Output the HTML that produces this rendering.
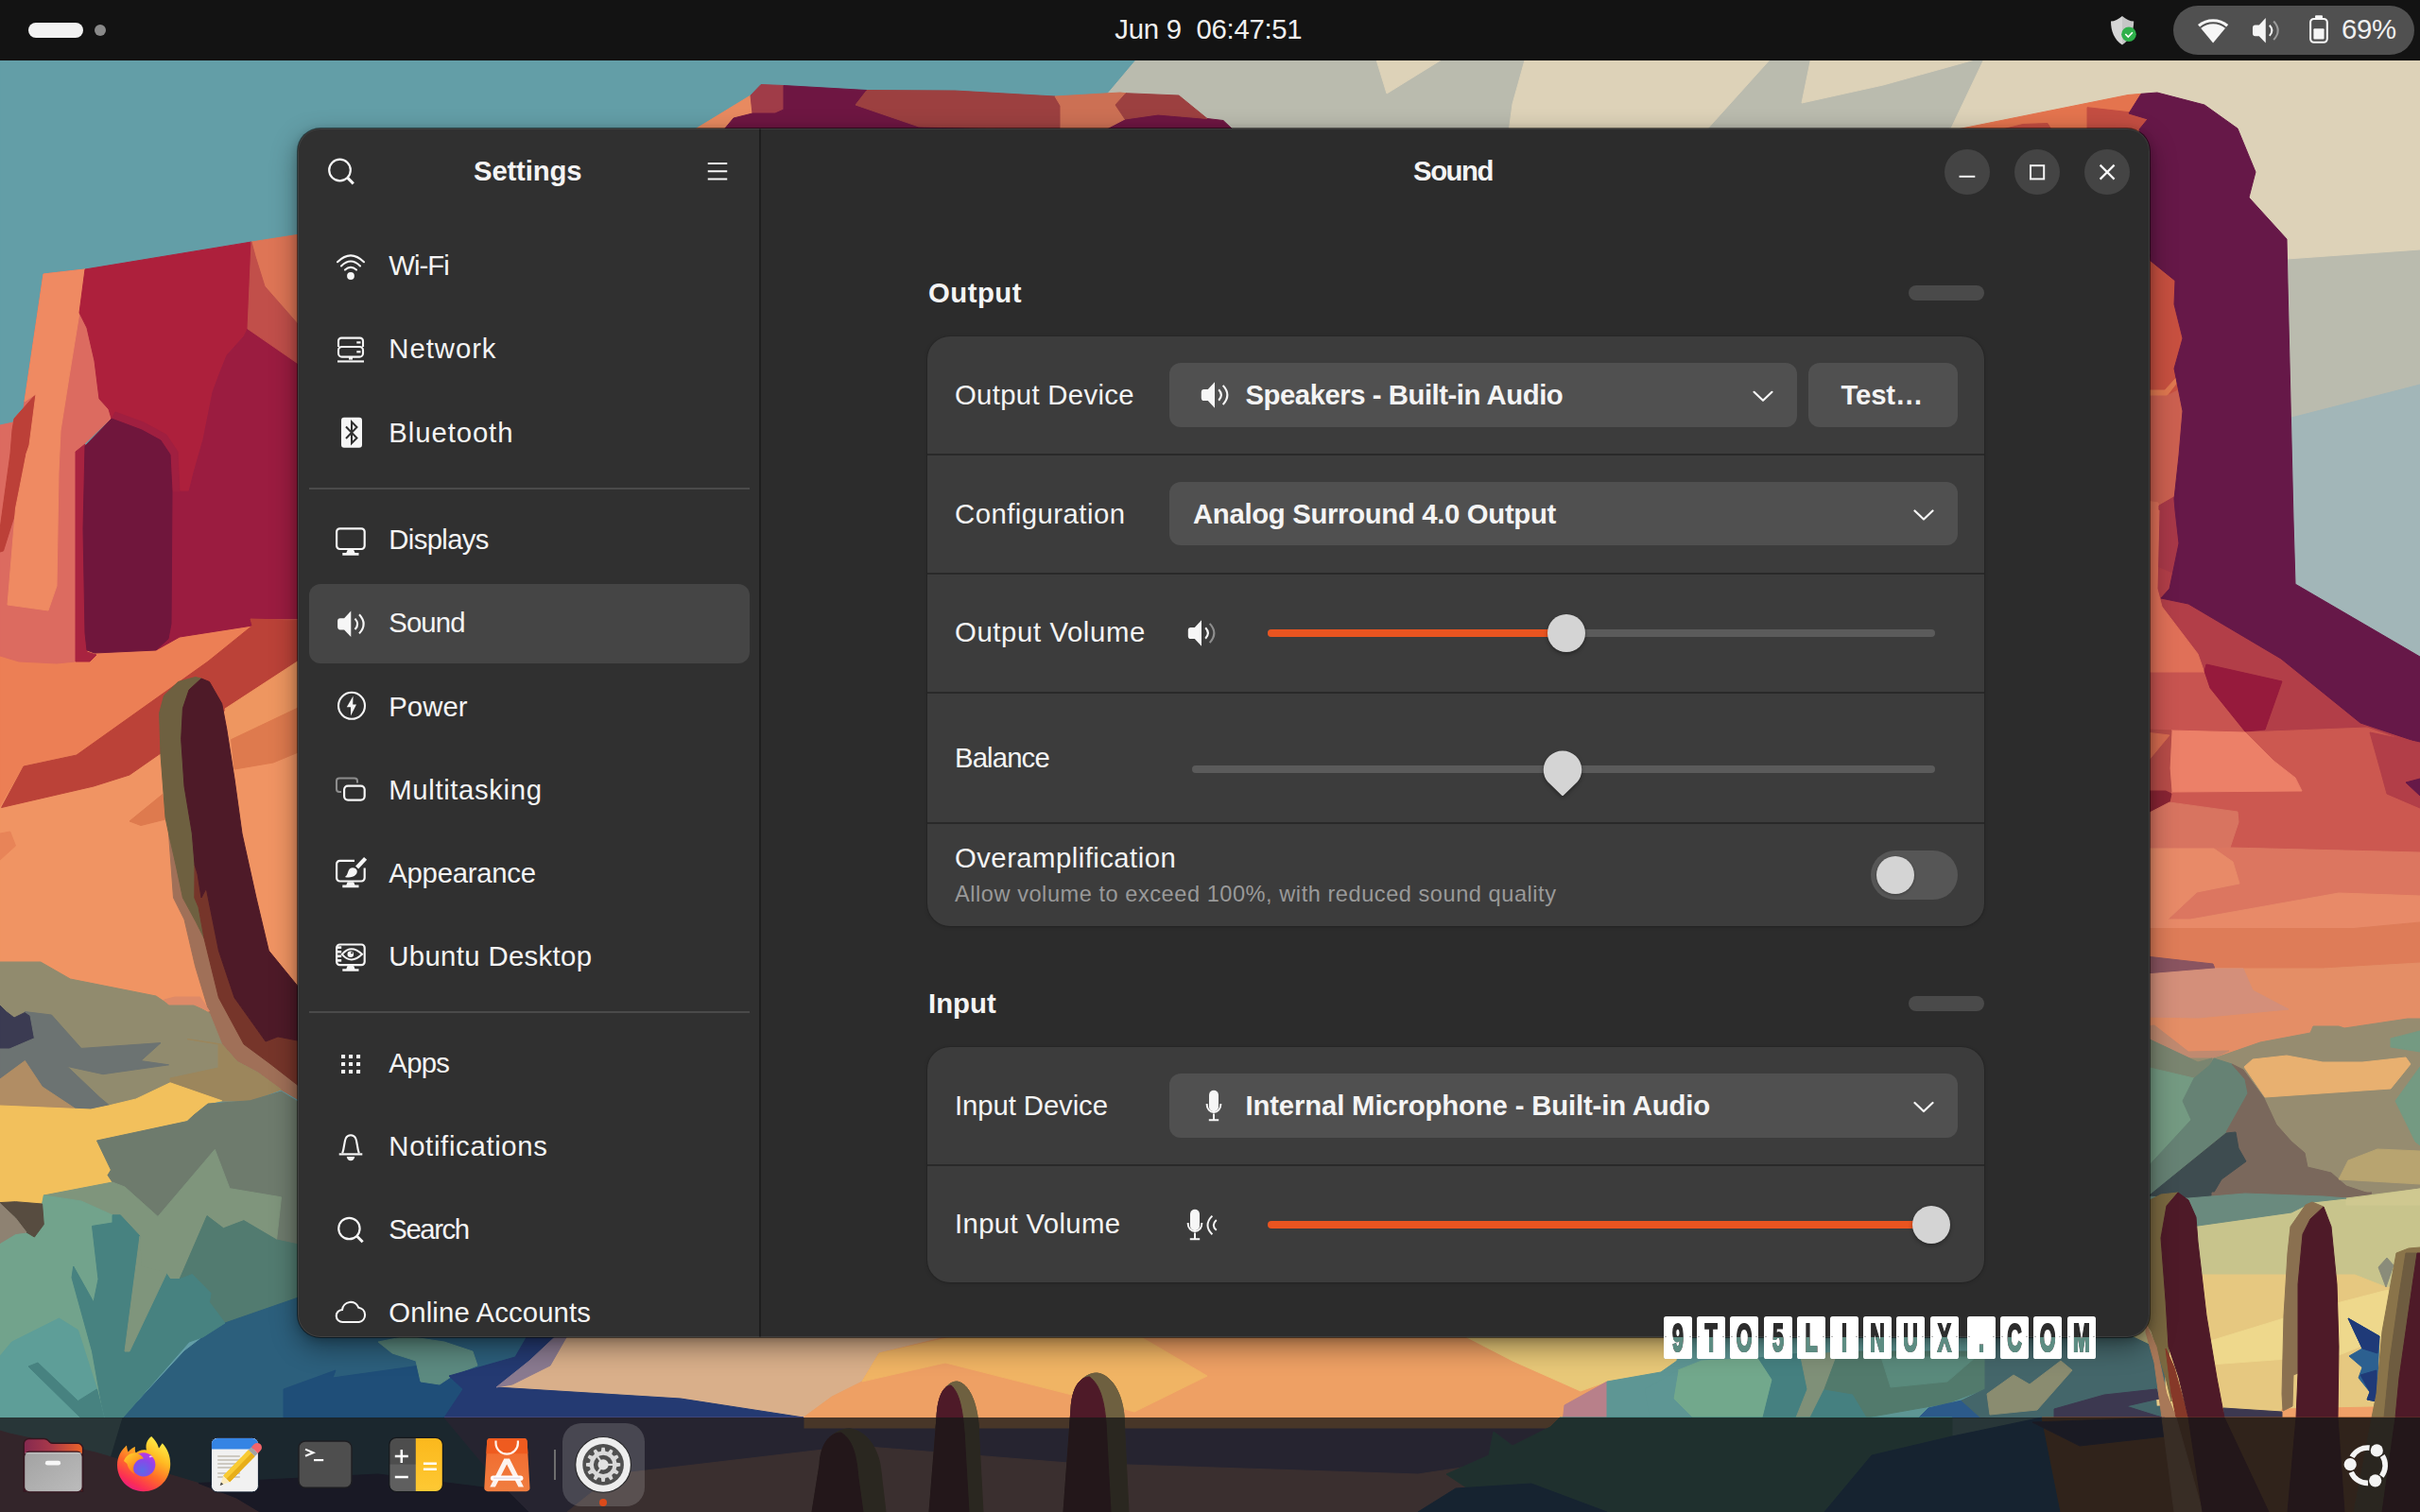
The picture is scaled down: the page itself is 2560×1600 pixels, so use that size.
<!DOCTYPE html>
<html lang="en"><head><meta charset="utf-8"><title>Settings - Sound</title>
<style>
*{box-sizing:border-box}
html,body{margin:0;padding:0}
body{width:2560px;height:1600px;overflow:hidden;background:#639ea7;position:relative;font-family:"Liberation Sans", sans-serif;-webkit-font-smoothing:antialiased}
.wall{position:absolute;left:0;top:0}
.abs{position:absolute}
.t{position:absolute;white-space:pre;line-height:1;font-kerning:normal}
#topbar{position:absolute;left:0;top:0;width:2560px;height:64px;background:#131313}
#pill{position:absolute;left:30px;top:24px;width:58px;height:16px;border-radius:8px;background:#f2f2f2}
#dot{position:absolute;left:100px;top:26px;width:12px;height:12px;border-radius:6px;background:#8a8a8a}
#sys{position:absolute;left:2299px;top:6px;width:255px;height:52px;border-radius:26px;background:#505050}
#win{position:absolute;left:315px;top:136px;width:1959px;height:1279px;border-radius:24px;background:#2c2c2c;
 box-shadow:0 0 0 1px rgba(0,0,0,.5),0 10px 28px rgba(0,0,0,.42),0 2px 8px rgba(0,0,0,.2);overflow:hidden}
#win:after{content:"";position:absolute;inset:0;border-radius:24px;box-shadow:inset 0 0 0 1px rgba(255,255,255,.08);pointer-events:none}
#side{position:absolute;left:0;top:0;width:488px;height:1279px;background:#303030}
#divider{position:absolute;left:488px;top:0;width:2px;height:1279px;background:#1e1e1e}
.sep{position:absolute;left:12px;width:466px;height:2px;background:#4a4a4a}
#sel{position:absolute;left:12px;top:482px;width:466px;height:84px;border-radius:12px;background:#454545}
.wb{position:absolute;top:22px;width:48px;height:48px;border-radius:24px;background:#444}
.card{position:absolute;left:666px;width:1118px;border-radius:24px;background:#3c3c3c;overflow:hidden;box-shadow:0 0 0 1px rgba(0,0,0,.08),0 1px 4px rgba(0,0,0,.18)}
.rowsep{position:absolute;left:0;width:1118px;height:2px;background:#292929}
.btn{position:absolute;border-radius:12px;background:#505050}
.lvl{position:absolute;left:1704px;width:80px;height:16px;border-radius:8px;background:#4a4a4a}
.trough{position:absolute;height:8px;border-radius:4px;background:#5b5b5b}
.fill{position:absolute;height:8px;border-radius:4px;background:#e95420}
.knob{position:absolute;width:40px;height:40px;border-radius:20px;background:#d4d4d4;box-shadow:0 2px 4px rgba(0,0,0,.35)}
#switch{position:absolute;left:1664px;top:764px;width:92px;height:52px;border-radius:26px;background:#565656}
#dock{position:absolute;left:0;top:1500px;width:2560px;height:100px;background:rgba(22,22,22,.77)}
#tile{position:absolute;left:595px;top:6px;width:87px;height:88px;border-radius:20px;background:rgba(255,255,255,.16)}
.wm{position:absolute;top:1392.5px;width:30px;height:45.2px;background:#fff;border-radius:2.6px;overflow:hidden;text-align:center;isolation:isolate}
.wm b{display:block;font-size:43px;line-height:45px;transform:scaleX(.5);transform-origin:50% 50%;font-weight:700;color:#2c2c2c;-webkit-text-stroke:2.2px #2c2c2c;margin:0 -10px}
.wm:after{content:"";position:absolute;left:0;right:0;top:22.5px;bottom:0;background:#5d8c82;mix-blend-mode:lighten}
.wm:before{content:"";position:absolute;left:1px;right:1px;top:21.5px;height:1px;background:repeating-linear-gradient(90deg,rgba(120,120,120,.55) 0 2px,transparent 2px 26px);z-index:2}
.ovl{position:absolute;left:0;top:0}
</style></head>
<body>
<svg class="wall" width="2560" height="1600" viewBox="0 0 2560 1600" stroke-width="1" stroke-linejoin="round">
<polygon fill="#639ea7" stroke="#639ea7" points="0,0 1201,0 1201,64 1172,100 1172,400 0,600"/>
<polygon fill="#babbae" stroke="#babbae" points="1250,0 2560,0 2560,1100 1100,1100 1171,100 1203,62"/>
<polygon fill="#ddd2b8" stroke="#ddd2b8" points="1455,60 1530,60 1467,99"/>
<polygon fill="#ddd2b8" stroke="#ddd2b8" points="1614,60 1600,110 1596,140 1803,140 1875,60"/>
<polygon fill="#ddd2b8" stroke="#ddd2b8" points="1916,60 1906,109 1992,90 2100,60"/>
<polygon fill="#ddd2b8" stroke="#ddd2b8" points="2100,60 2062,140 2560,140 2560,60"/>
<polygon fill="#ddd2b8" stroke="#ddd2b8" points="2062,136 2560,136 2560,264 2419,274 2300,300 2000,300"/>
<polygon fill="#a2b6b8" stroke="#a2b6b8" points="2424,442 2560,407 2560,720 2424,700"/>
<polygon fill="#e88a60" stroke="#e88a60" points="735,137 794,101 796,120 776,125 766,137"/>
<polygon fill="#a03c48" stroke="#a03c48" points="794,101 805,89.5 829,90.5 829,116 820,120 796,120"/>
<polygon fill="#6e1642" stroke="#6e1642" points="829,90.5 917,95.5 905,111 972,134 1304,137 1294,127.5 1277,125.5 1225,121 1190,126 1169,137 766,137 776,125 796,120 820,120 829,116"/>
<polygon fill="#9c4040" stroke="#9c4040" points="917,95.5 1010,96 1116,102 1122,112 1122,137 972,134 905,111"/>
<polygon fill="#cc7054" stroke="#cc7054" points="1116,102 1185,98 1191,98.7 1180,111 1190,126 1169,137 1122,137 1122,112"/>
<polygon fill="#9c4040" stroke="#9c4040" points="1191,98.7 1247,101 1277,125.5 1225,121 1190,126 1180,111"/>
<polygon fill="#e4744e" stroke="#e4744e" points="2070,137 2251,100.5 2265,99.3 2252,120 2272,126 2263,137 2274,300 2070,300"/>
<polygon fill="#c44e42" stroke="#c44e42" points="2208,113.7 2252,118.7 2272,126 2263,137 2208,137"/>
<polygon fill="#c44e42" stroke="#c44e42" points="2118,137 2140,131.5 2166,130.5 2170,137"/>
<polygon fill="#c85040" stroke="#c85040" points="2270,270 2310,270 2310,420 2270,420"/>
<polygon fill="#e07850" stroke="#e07850" points="2270,413 2290,413 2302,400 2302,406 2292,419 2270,419"/>
<polygon fill="#cc6050" stroke="#cc6050" points="2270,419 2292,419 2310,410 2310,545 2270,545"/>
<polygon fill="#dc7058" stroke="#dc7058" points="2270,530 2283,532 2284,545 2270,545"/>
<polygon fill="#a83848" stroke="#a83848" points="2284,535 2310,520 2310,640 2282,623"/>
<polygon fill="#b23e48" stroke="#b23e48" points="2282,600 2560,720 2560,860 2270,860"/>
<polygon fill="#e07058" stroke="#e07058" points="2270,540 2284,540 2282,623 2287,642 2325,692 2332,712 2270,712"/>
<polygon fill="#c85450" stroke="#c85450" points="2270,712 2332,712 2338,728 2375,775 2270,772"/>
<polygon fill="#961a3c" stroke="#961a3c" points="2334,703 2414,721 2396,772 2375,774 2338,728 2332,710"/>
<polygon fill="#661848" stroke="#661848" points="2265,99.3 2282,98 2332,111 2367,136 2386,182 2379,209 2419,253 2420,300 2426,550 2428,618 2560,695 2560,786 2497,765 2413,697 2315,639 2286,633 2295,623 2305,575 2301,540 2300,528 2305,482 2309,435 2300,390 2309,358 2300,322 2301,297 2275,276 2263,137 2272,126 2252,120"/>
<polygon fill="#cc5850" stroke="#cc5850" points="2375,775 2504,770 2560,790 2560,902 2359,897 2368,870 2367,859 2296,849 2297,838 2435,837 2428,823 2405,805 2380,780"/>
<polygon fill="#ec8068" stroke="#ec8068" points="2297,773 2375,775 2380,780 2405,805 2428,823 2435,837 2297,838 2295,813"/>
<polygon fill="#b84c48" stroke="#b84c48" points="2270,772 2297,773 2295,813 2297,838 2270,838"/>
<polygon fill="#d86c50" stroke="#d86c50" points="2270,775 2295,778 2270,808"/>
<polygon fill="#b23e48" stroke="#b23e48" points="2507,775 2560,786 2560,855 2525,840 2519,818"/>
<polygon fill="#661848" stroke="#661848" points="2545,828 2560,824 2560,842"/>
<polygon fill="#8a2434" stroke="#8a2434" points="2270,837 2291,837 2297,840 2295,849 2270,862"/>
<polygon fill="#d87460" stroke="#d87460" points="2270,862 2295,849 2367,859 2368,870 2359,897 2342,898 2270,898"/>
<polygon fill="#dc7660" stroke="#dc7660" points="2359,897 2560,902 2560,948 2474,945 2317,973 2293,973 2324,944 2369,935 2362,912 2342,898"/>
<polygon fill="#e88a68" stroke="#e88a68" points="2270,898 2342,898 2362,912 2369,935 2324,944 2293,973 2317,973 2474,945 2560,948 2560,976 2490,982.5 2270,982.5"/>
<polygon fill="#de7c58" stroke="#de7c58" points="2270,982.5 2490,982.5 2560,976 2560,1019 2457,1025 2342,1025 2341,1020 2270,1012"/>
<polygon fill="#8a5460" stroke="#8a5460" points="2270,1012 2341,1020 2343,1025 2270,1031"/>
<polygon fill="#e48e66" stroke="#e48e66" points="2343,1025 2457,1025 2560,1019 2560,1078 2547,1078 2480,1088 2474,1086 2447,1086 2444,1093 2391,1103 2342,1120 2358,1112 2315,1113 2279,1085 2270,1086 2270,1076 2325,1077 2421,1068 2383,1048 2373,1025"/>
<polygon fill="#d48f7a" stroke="#d48f7a" points="2270,1031 2343,1025 2373,1025 2383,1048 2421,1068 2325,1077 2270,1076"/>
<polygon fill="#c08a70" stroke="#c08a70" points="2270,1086 2279,1085 2315,1113 2358,1112 2340,1120 2325,1124 2270,1098"/>
<polygon fill="#968c70" stroke="#968c70" points="2342,1120 2391,1103 2444,1093 2447,1086 2474,1086 2480,1088 2547,1078 2560,1078 2560,1270 2300,1270 2300,1120"/>
<polygon fill="#7a8570" stroke="#7a8570" points="2270,1098 2325,1124 2340,1120 2338,1127 2321,1141 2270,1129"/>
<polygon fill="#749a82" stroke="#749a82" points="2270,1129 2321,1141 2309,1165 2318,1185 2270,1237"/>
<polygon fill="#668274" stroke="#668274" points="2338,1127 2342,1120 2361,1126 2375,1142 2378,1157 2355,1198 2270,1268 2270,1237 2318,1185 2309,1165 2321,1141"/>
<polygon fill="#7a685c" stroke="#7a685c" points="2361,1126 2373,1132 2395,1162 2408,1190 2424,1208 2438,1220 2441,1235 2466,1241 2482,1255 2509,1264 2482,1270 2340,1265 2350,1248 2376,1229 2368,1215 2365,1198 2355,1198 2378,1157 2375,1142"/>
<polygon fill="#3e4c50" stroke="#3e4c50" points="2355,1199 2365,1198 2368,1215 2376,1229 2350,1248 2340,1265 2315,1272 2270,1275 2270,1268"/>
<polygon fill="#e8b070" stroke="#e8b070" points="2374,1129 2383,1121 2419,1117 2457,1124 2499,1124 2545,1119 2550,1126 2529,1152 2396,1161"/>
<polygon fill="#749a82" stroke="#749a82" points="2560,1091 2529,1099 2529,1108 2560,1113"/>
<polygon fill="#749a82" stroke="#749a82" points="2560,1129 2534,1165 2555,1208 2560,1212"/>
<polygon fill="#b8a470" stroke="#b8a470" points="2474,1248 2484,1228 2515,1216 2560,1218 2560,1253"/>
<polygon fill="#7a685c" stroke="#7a685c" points="2340,1262 2509,1262 2474,1270 2340,1270"/>
<polygon fill="#c8c48c" stroke="#c8c48c" points="2270,1300 2325,1297 2424,1283 2446,1272 2482,1268 2560,1258 2560,1372 2490,1352 2270,1352"/>
<polygon fill="#cfc890" stroke="#cfc890" points="2482,1270 2560,1258 2560,1275 2482,1275"/>
<polygon fill="#6a8a7e" stroke="#6a8a7e" points="2270,1266 2315,1268 2375,1263 2458,1266 2482,1268 2446,1272 2424,1283 2325,1297 2270,1300"/>
<polygon fill="#e6c880" stroke="#e6c880" points="2270,1349 2491,1349 2524,1362 2560,1365 2560,1500 2270,1500"/>
<polygon fill="#eed88c" stroke="#eed88c" points="2338,1419 2416,1395 2472,1379 2522,1366 2560,1360 2560,1400 2474,1434 2338,1444"/>
<polygon fill="#f0a068" stroke="#f0a068" points="2414,1491 2560,1488 2560,1500 2414,1500"/>
<polygon fill="#8a8c7a" stroke="#8a8c7a" points="2516,1341 2525,1331 2532,1339 2524,1362"/>
<polygon fill="#2c6090" stroke="#2c6090" points="2484,1395 2517,1414 2514,1483 2504,1481 2507,1473 2495,1458 2499,1447 2485,1435 2499,1427"/>
<polygon fill="#1f3a78" stroke="#1f3a78" points="2484,1395 2517,1414 2515,1432 2499,1427"/>
<polygon fill="#1f3a78" stroke="#1f3a78" points="2497,1455 2514,1450 2514,1483 2504,1481 2507,1473"/>
<polygon fill="#44666a" stroke="#44666a" points="2100,1410 2290,1410 2290,1500 2100,1500"/>
<polygon fill="#a8a070" stroke="#a8a070" points="2255,1413 2274,1400 2280,1425"/>
<polygon fill="#3c3850" stroke="#3c3850" points="2173,1491 2226,1476 2281,1470 2284,1480 2249,1488 2287,1500 2173,1500"/>
<polygon fill="#e8cc88" stroke="#e8cc88" points="2249,1488 2284,1481 2286,1487"/>
<polygon fill="#3c3850" stroke="#3c3850" points="2352,1490 2414,1494 2414,1500 2353,1500"/>
<polygon fill="#8a7050" stroke="#8a7050" points="2423,1298 2439,1275 2446,1272 2458,1277 2444,1290 2436,1306 2431,1359 2431,1453 2426,1455 2425,1488 2415,1493 2414,1475 2416,1392 2420,1326"/>
<polygon fill="#4e1a28" stroke="#4e1a28" points="2458,1277 2466,1298 2472,1359 2474,1425 2473,1500 2429,1500 2431,1453 2431,1359 2436,1306 2444,1290"/>
<polygon fill="#8a744a" stroke="#8a744a" points="2535,1326 2548,1321 2560,1320 2560,1500 2509,1500 2514,1475 2520,1409 2529,1359"/>
<polygon fill="#6e5c40" stroke="#6e5c40" points="2545,1326 2557,1326 2553,1353 2538,1458 2534,1500 2522,1500 2528,1440 2538,1370"/>
<polygon fill="#4e1a28" stroke="#4e1a28" points="2557,1326 2560,1326 2560,1500 2534,1500 2538,1458 2553,1353"/>
<polygon fill="#ec7f55" stroke="#ec7f55" points="0,640 330,640 330,860 0,860"/>
<polygon fill="#f09463" stroke="#f09463" points="0,855 25,811 81,799 170,797 330,690 330,1100 0,1100"/>
<polygon fill="#dc6b60" stroke="#dc6b60" points="0,450 14,447 15,443 25,432 26,425 46,290 90,285 84,331 92,347 100,382 105,422 115,433 118,442 82,477 80,700 60,702 20,700 0,694"/>
<polygon fill="#bc4038" stroke="#bc4038" points="15,443 38,417 31,471 27,480 17,540 3.5,583 0,584 0,560 11,480 13,455"/>
<polygon fill="#ef8a62" stroke="#ef8a62" points="46,290 90,285 84,331 73,399 64,456 62,500 60,620 51,646 8,640 16.5,538 28,480 31,471 38,417 26,425"/>
<polygon fill="#ad203c" stroke="#ad203c" points="90,285 266,256 262,348 258,356 240,376 232,396 225,415 215,465 205,500 200,520 182,520 180,481 170,466 150,455 118,443 115,433 105,422 100,382 92,347 84,331"/>
<polygon fill="#a82340" stroke="#a82340" points="80,478 90,470 92,690 102,693 95,700 80,700"/>
<polygon fill="#9b1c40" stroke="#9b1c40" points="258,356 262,348 330,390 330,655 265,655 267,662 190,674 165,688 180,640 182,520 200,520 205,500 215,465 225,415 232,396 240,376"/>
<polygon fill="#a01f40" stroke="#a01f40" points="118,443 150,455 170,466 180,481 182,520 190,520 188,478 176,460 152,447 122,436"/>
<polygon fill="#70163c" stroke="#70163c" points="118,443 150,455 170,466 180,481 182,520 181,660 178,676 165,688 100,691 92,688 90,670 88,560 90,472"/>
<polygon fill="#de7556" stroke="#de7556" points="266,256 330,246 330,360 280,303 270,271"/>
<polygon fill="#c14f4a" stroke="#c14f4a" points="266,256 270,271 280,303 330,360 330,395 262,348"/>
<polygon fill="#bb4238" stroke="#bb4238" points="265,655 330,657 330,690 170,797 137,820 99,832 1.6,854.5 25,811 81,799 220,700 267,662"/>
<polygon fill="#ee9660" stroke="#ee9660" points="238,750 330,690 330,742 244,783"/>
<polygon fill="#de7a4e" stroke="#de7a4e" points="244.6,782.6 330,742 330,790 289,807 248,814"/>
<polygon fill="#de7a4e" stroke="#de7a4e" points="137,869 172,840.5 175,867 149,873.5"/>
<polygon fill="#e88458" stroke="#e88458" points="0,882 10.7,880 16.5,895 0,910"/>
<polygon fill="#a07058" stroke="#a07058" points="178.5,882 186,915 193.4,950 207,975 216,993 231.4,1055.7 258,1105 285,1125 330,1160 330,1172 297,1153 272.7,1135 251,1123.5 234.7,1105 221.5,1072 206.6,1022.6 195,973 183.5,950"/>
<polygon fill="#6e6040" stroke="#6e6040" points="206.6,716.5 188.4,721.5 173.5,736 168.6,754.5 170,799 175,865 178.5,882 186,915 193.4,950 207,975 216,993 210,960 205.8,950 206,915 203.3,882 195,832 191.7,782.6 193.4,749.6 200,730 213,718"/>
<polygon fill="#76352a" stroke="#76352a" points="206,915 205.8,950 210,960 216,993 231.4,1055.7 258,1105 285,1125 330,1160 330,1104 294,1097 281,1102 248,1055.7 231.4,1006 218.2,940 213,950 209,925"/>
<polygon fill="#4e1a28" stroke="#4e1a28" points="213,718 221.5,721.5 234.7,744.6 239.7,771 248,824 256,882 271,950 284.3,1006 330,1062 330,1104 294,1097 281,1102 248,1055.7 231.4,1006 218.2,940 213,950 209,925 206,915 203.3,882 195,832 191.7,782.6 193.4,749.6 200,730"/>
<polygon fill="#918b6e" stroke="#918b6e" points="0,1018 43,1018 74.4,1036 165,1054 178.5,1063 205,1063 221.5,1072 234.7,1105 251,1123.5 272.7,1135 297,1153 264,1165 235,1165 180,1146 144,1163 116,1170 96,1174 0,1170"/>
<polygon fill="#de8a68" stroke="#de8a68" points="173.5,1058 185,1055 211.6,1055 221.5,1070 205,1063 178.5,1063"/>
<polygon fill="#9c865c" stroke="#9c865c" points="180,1141 231,1130 231,1105 198,1099.5 234.7,1105 251,1123.5 272.7,1135 297.5,1153 264.5,1165 234.7,1165 180,1146"/>
<polygon fill="#3b3b52" stroke="#3b3b52" points="0,1064 6.6,1070.5 15,1077 26.4,1071.4 32,1074.7 36.4,1098.7 10,1110 0,1110"/>
<polygon fill="#6c7372" stroke="#6c7372" points="26.4,1070.6 54.5,1074 86,1109.4 170,1103.6 149,1122.6 178.5,1126.8 109,1136.7 71,1128.4 105.8,1161.5 115.7,1169.8 96,1174 79.3,1173 44.6,1150 26.4,1122.6 0,1141.7 0,1110 10,1110 36.4,1098.7 32,1074.7"/>
<polygon fill="#b18d64" stroke="#b18d64" points="0,1142 26.4,1122.6 44.6,1150 79.3,1173 0,1170"/>
<polygon fill="#f2c05c" stroke="#f2c05c" points="0,1170 96,1174 115.7,1169.8 143.8,1163 180,1145.8 234.7,1164.8 220,1168 205,1180 198,1186.6 102.5,1207 117.4,1238 114,1243.6 119,1251 46.3,1265 44.6,1274 16.5,1271.7 0,1272.6"/>
<polygon fill="#6e7b6d" stroke="#6e7b6d" points="205,1180 220,1168 264.5,1164.8 297.5,1155 330,1175 330,1320 292.6,1312 297.5,1266.8 243,1257.7 227.3,1216.4 167,1287.4 132,1256 119,1251 114,1243.6 117.4,1238 102.5,1207 198,1186.6"/>
<polygon fill="#7f957c" stroke="#7f957c" points="119,1251 132,1256 167,1287.4 227.3,1216.4 243,1257.7 297.5,1266.8 292.6,1312 257.9,1291.6 236.4,1299.8 219,1286.6 190,1353.6 180,1353.6 176,1347.8 137,1430 132,1430 148,1308 127.3,1285.8 119,1285.8 86,1271 46.3,1265"/>
<polygon fill="#72a38c" stroke="#72a38c" points="46.3,1265 86,1271 119,1285.8 119,1294 97.5,1297.4 104,1353.6 99,1378 77.7,1340 76,1352 97.5,1430 110,1500 0,1500 0,1315.5 16.5,1305.6 28,1304 36.4,1309 46.3,1295.7 44.6,1274"/>
<polygon fill="#574c40" stroke="#574c40" points="0,1272.6 16.5,1271.7 44.6,1274 46.3,1295.7 36.4,1309 28,1304 16.5,1289 0,1273.4"/>
<polygon fill="#8e8272" stroke="#8e8272" points="0,1273.4 16.5,1289 28,1304 16.5,1305.6 0,1315.5"/>
<polygon fill="#527b70" stroke="#527b70" points="219,1286.6 236.4,1299.8 257.9,1291.6 292.6,1312 330,1320 330,1373.4 238,1400 221.5,1378 223,1368.4 203.3,1348.6 190,1353.6"/>
<polygon fill="#2c5f7c" stroke="#2c5f7c" points="330,1368 238,1400 215,1414.7 195,1430 130,1500 100,1600 600,1600 600,1400 330,1400"/>
<polygon fill="#478280" stroke="#478280" points="97.5,1297.4 119,1294 119,1285.8 127.3,1285.8 148,1308 132,1430 137,1430 176,1347.8 180,1353.6 190,1353.6 203.3,1348.6 223,1368.4 221.5,1378 238,1400 215,1414.7 200,1420 130,1500 110,1500 97.5,1430 76,1352 77.7,1340 99,1378 104,1353.6"/>
<polygon fill="#7f957c" stroke="#7f957c" points="132,1430 137,1430 176,1347.8 170,1345 150,1340 148,1308"/>
<polygon fill="#5e9e98" stroke="#5e9e98" points="0,1435 12.5,1420 62.5,1395 82.5,1407.5 102.5,1470 110,1500 0,1500"/>
<polygon fill="#478280" stroke="#478280" points="30,1446 40,1442 82.5,1482.5 102.5,1470 110,1500 85,1500"/>
<polygon fill="#1f4e78" stroke="#1f4e78" points="300,1470 355,1450 352,1458 480,1440 520,1470 480,1500 300,1500"/>
<polygon fill="#5c8a80" stroke="#5c8a80" points="400,1420 430,1414 470,1420 500,1430 505,1445 480,1455 465,1465 445,1462 440,1440 415,1432"/>
<polygon fill="#d9af8a" stroke="#d9af8a" points="590,1410 1020,1410 930,1432 912,1462 880,1478 850,1500 720,1480 525,1468 540,1465 580,1445"/>
<polygon fill="#243a72" stroke="#243a72" points="560,1410 592,1410 560,1440 525,1468 720,1480 850,1500 470,1500 490,1470 475,1456 545,1436"/>
<polygon fill="#8a7a90" stroke="#8a7a90" points="592,1410 602,1410 582,1445 542,1465 525,1468 560,1440"/>
<polygon fill="#eea064" stroke="#eea064" points="1020,1410 1700,1410 1700,1515 850,1515 850,1500 880,1478 912,1462 930,1432"/>
<polygon fill="#f0b464" stroke="#f0b464" points="930,1432 1020,1412 1202,1412 1277,1456 1200,1494 1130,1475 1000,1442 912,1462"/>
<polygon fill="#e8c878" stroke="#e8c878" points="1542,1410 1778,1410 1774,1440 1757,1452 1700,1462 1672,1472 1600,1440"/>
<polygon fill="#b8808a" stroke="#b8808a" points="1655,1487 1700,1462 1700,1515 1652,1515"/>
<polygon fill="#5e9694" stroke="#5e9694" points="1700,1462 1757,1452 1774,1440 1778,1410 2270,1410 2270,1500 1700,1500"/>
<polygon fill="#72a88c" stroke="#72a88c" points="1775,1450 1800,1440 1860,1437 1875,1460 1865,1500 1790,1500 1770,1480"/>
<polygon fill="#458080" stroke="#458080" points="1860,1437 1905,1432 1912,1470 1900,1500 1865,1500 1875,1460"/>
<polygon fill="#7f9078" stroke="#7f9078" points="1905,1436 1945,1430 1930,1470 1915,1500 1900,1500 1912,1470"/>
<polygon fill="#458080" stroke="#458080" points="1930,1470 1960,1475 1975,1500 1915,1500"/>
<polygon fill="#527a6c" stroke="#527a6c" points="1945,1430 2115,1430 2125,1450 2100,1470 2060,1485 1975,1500 1960,1475 1930,1470"/>
<polygon fill="#5a8a7c" stroke="#5a8a7c" points="1990,1436 2090,1436 2060,1462 2000,1468"/>
<polygon fill="#2c5a8a" stroke="#2c5a8a" points="2040,1490 2075,1482 2100,1490 2100,1500 2030,1500"/>
<polygon fill="#5e9694" stroke="#5e9694" points="1740,1470 1775,1450 1770,1480 1790,1500 1745,1500"/>
<polygon fill="#44666a" stroke="#44666a" points="2100,1410 2276,1410 2282,1500 2095,1500 2075,1482 2100,1470"/>
<polygon fill="#8a8c70" stroke="#8a8c70" points="2102,1475 2130,1455 2147,1465 2180,1440 2192,1450 2155,1492 2105,1497"/>
<polygon fill="#a8a070" stroke="#a8a070" points="2255,1413 2274,1400 2280,1425"/>
<polygon fill="#3c3850" stroke="#3c3850" points="2173,1491 2226,1476 2281,1470 2284,1480 2249,1488 2287,1500 2173,1500"/>
<path fill="#6e6040" stroke="#6e6040" d="M983 1600 L991 1500 C992 1476 1001.25 1462 1012.5 1462 C1025.1 1464 1033 1484 1035 1507 L1040 1600Z"/>
<path fill="#4e1a28" stroke="#4e1a28" d="M983 1600 L991 1500 C992 1476 999 1466 1006.2 1466 C1014.75 1474 1018 1490 1020 1514 L1025 1600Z"/>
<path fill="#6e6040" stroke="#6e6040" d="M1125 1600 L1133 1491 C1134 1467 1146.25 1453 1160.5 1453 C1176.46 1455 1187 1475 1189 1498 L1194 1600Z"/>
<path fill="#4e1a28" stroke="#4e1a28" d="M1125 1600 L1133 1491 C1134 1467 1143.4 1457 1152.52 1457 C1163.35 1465 1168 1481 1170 1505 L1175 1600Z"/>
<path fill="#6e6040" stroke="#6e6040" d="M859 1600 L867 1550 C868 1526 882.5 1512 899 1512 C917.48 1514 930 1534 932 1557 L937 1600Z"/>
<path fill="#4e1a28" stroke="#4e1a28" d="M859 1600 L867 1550 C868 1526 879.2 1516 889.76 1516 C902.3 1524 906 1540 908 1564 L913 1600Z"/>
<polygon fill="#7a6840" stroke="#7a6840" points="2270,1272 2286,1264 2304,1262 2292,1276 2286,1310 2291,1376 2294,1425 2297,1483 2291,1458 2276,1409 2270,1400"/>
<polygon fill="#a87858" stroke="#a87858" points="2270,1400 2281,1425 2292,1475 2302,1500 2287,1500 2279,1442 2270,1410"/>
<polygon fill="#863828" stroke="#863828" points="2291,1427 2300,1447 2315,1500 2302,1500 2297,1475"/>
<polygon fill="#4e1a28" stroke="#4e1a28" points="2304,1262 2315,1270 2323,1288 2325,1314 2334,1392 2345,1458 2353,1500 2315,1500 2305,1458 2294,1425 2291,1376 2286,1310 2292,1276"/>
<polygon fill="#94576d" stroke="#94576d" points="0,1514 10,1517 101,1537 210,1569.5 250,1585 275,1600 0,1600"/>
<polygon fill="#232357" stroke="#232357" points="210,1569.5 400,1560 600,1585 600,1600 275,1600 250,1585"/>
<polygon fill="#5b5387" stroke="#5b5387" points="470,1500 850,1500 850,1512 1700,1512 1700,1600 560,1600 520,1560"/>
<polygon fill="#b08080" stroke="#b08080" points="650,1560 905,1530 1130,1548 1500,1560 1700,1530 1700,1600 600,1600"/>
<path fill="#6e6040" stroke="#6e6040" d="M983 1600 L991 1500 C992 1476 1001.25 1462 1012.5 1462 C1025.1 1464 1033 1484 1035 1507 L1040 1600Z"/>
<path fill="#4e1a28" stroke="#4e1a28" d="M983 1600 L991 1500 C992 1476 999 1466 1006.2 1466 C1014.75 1474 1018 1490 1020 1514 L1025 1600Z"/>
<path fill="#6e6040" stroke="#6e6040" d="M1125 1600 L1133 1491 C1134 1467 1146.25 1453 1160.5 1453 C1176.46 1455 1187 1475 1189 1498 L1194 1600Z"/>
<path fill="#4e1a28" stroke="#4e1a28" d="M1125 1600 L1133 1491 C1134 1467 1143.4 1457 1152.52 1457 C1163.35 1465 1168 1481 1170 1505 L1175 1600Z"/>
<path fill="#6e6040" stroke="#6e6040" d="M859 1600 L867 1550 C868 1526 882.5 1512 899 1512 C917.48 1514 930 1534 932 1557 L937 1600Z"/>
<path fill="#4e1a28" stroke="#4e1a28" d="M859 1600 L867 1550 C868 1526 879.2 1516 889.76 1516 C902.3 1524 906 1540 908 1564 L913 1600Z"/>
<polygon fill="#3d877e" stroke="#3d877e" points="1650,1500 2065,1500 2065,1530 1980,1540 1930,1600 1600,1600 1560,1580 1530,1560 1575,1540 1580,1515 1600,1530 1640,1510"/>
<polygon fill="#164e87" stroke="#164e87" points="1930,1600 1980,1540 2065,1520 2160,1500 2180,1600"/>
<polygon fill="#164e87" stroke="#164e87" points="1500,1600 1540,1575 1620,1570 1700,1600"/>
<polygon fill="#874e2b" stroke="#874e2b" points="2160,1500 2560,1500 2560,1600 2180,1600"/>
<polygon fill="#2a2a50" stroke="#2a2a50" points="2150,1505 2290,1500 2290,1520 2200,1530"/>
<polygon fill="#a87858" stroke="#a87858" points="2287,1500 2302,1500 2330,1600 2300,1600"/>
<polygon fill="#4e1a28" stroke="#4e1a28" points="2315,1500 2353,1500 2400,1600 2330,1600"/>
<polygon fill="#4e1a28" stroke="#4e1a28" points="2429,1500 2473,1500 2480,1600 2420,1600"/>
<polygon fill="#6e5c40" stroke="#6e5c40" points="2509,1500 2534,1500 2520,1600 2490,1600"/>
<polygon fill="#4e1a28" stroke="#4e1a28" points="2534,1500 2560,1500 2560,1600 2520,1600"/>
</svg>
<div id="topbar"><div id="pill"></div><div id="dot"></div><div id="sys"></div></div>
<div id="win"><div id="side"></div><div id="divider"></div><div class="sep" style="top:380px"></div><div class="sep" style="top:934px"></div><div id="sel"></div><div class="wb" style="left:1742px"></div><div class="wb" style="left:1816px"></div><div class="wb" style="left:1890px"></div><div class="lvl" style="top:166px"></div><div class="lvl" style="top:918px"></div><div class="card" style="top:220px;height:624px"><div class="rowsep" style="top:124px"></div><div class="rowsep" style="top:250px"></div><div class="rowsep" style="top:376px"></div><div class="rowsep" style="top:514px"></div><div class="btn" style="left:256px;top:28px;width:664px;height:68px"></div><div class="btn" style="left:932px;top:28px;width:158px;height:68px"></div><div class="btn" style="left:256px;top:154px;width:834px;height:67px"></div><div class="trough" style="left:360px;top:310px;width:706px"></div><div class="fill" style="left:360px;top:310px;width:316px"></div><div class="knob" style="left:656px;top:294px"></div><div class="trough" style="left:280px;top:454px;width:786px"></div><div id="switch" style="left:998px;top:544px"><div class="knob" style="left:6px;top:6px;box-shadow:0 1px 3px rgba(0,0,0,.3)"></div></div></div><div class="card" style="top:972px;height:249px"><div class="rowsep" style="top:124px"></div><div class="btn" style="left:256px;top:28px;width:834px;height:68px"></div><div class="fill" style="left:360px;top:184px;width:702px"></div><div class="knob" style="left:1042px;top:168px"></div></div></div>
<div class="wm" style="left:1760.0px"><b>9</b></div>
<div class="wm" style="left:1795.2px"><b>T</b></div>
<div class="wm" style="left:1830.4px"><b>O</b></div>
<div class="wm" style="left:1865.6px"><b>5</b></div>
<div class="wm" style="left:1900.8px"><b>L</b></div>
<div class="wm" style="left:1936.0px"><b>I</b></div>
<div class="wm" style="left:1971.2px"><b>N</b></div>
<div class="wm" style="left:2006.4px"><b>U</b></div>
<div class="wm" style="left:2041.6px"><b>X</b></div>
<div class="wm" style="left:2081.0px"><b>.</b></div>
<div class="wm" style="left:2116.2px"><b>C</b></div>
<div class="wm" style="left:2151.4px"><b>O</b></div>
<div class="wm" style="left:2186.6px"><b>M</b></div>
<div id="dock"><div id="tile"></div></div>
<span class="t" id="t0" style="left:1179.30px;top:15.67px;font-size:29.33px;font-weight:400;color:#f0f0f0;letter-spacing:-0.273px;">Jun 9  06:47:51</span>
<span class="t" id="t1" style="left:2477.00px;top:15.67px;font-size:29.33px;font-weight:400;color:#f0f0f0;letter-spacing:-0.352px;">69%</span>
<span class="t" id="t2" style="left:501.00px;top:166.17px;font-size:29.33px;font-weight:700;color:#f4f4f4;letter-spacing:-0.172px;">Settings</span>
<span class="t" id="t3" style="left:411.30px;top:266.42px;font-size:29.33px;font-weight:400;color:#f4f4f4;letter-spacing:-0.989px;">Wi-Fi</span>
<span class="t" id="t4" style="left:411.30px;top:354.42px;font-size:29.33px;font-weight:400;color:#f4f4f4;letter-spacing:0.940px;">Network</span>
<span class="t" id="t5" style="left:411.30px;top:442.67px;font-size:29.33px;font-weight:400;color:#f4f4f4;letter-spacing:0.908px;">Bluetooth</span>
<span class="t" id="t6" style="left:411.30px;top:556.42px;font-size:29.33px;font-weight:400;color:#f4f4f4;letter-spacing:-0.661px;">Displays</span>
<span class="t" id="t7" style="left:411.30px;top:644.42px;font-size:29.33px;font-weight:400;color:#f4f4f4;letter-spacing:-0.903px;">Sound</span>
<span class="t" id="t8" style="left:411.30px;top:732.67px;font-size:29.33px;font-weight:400;color:#f4f4f4;letter-spacing:0.015px;">Power</span>
<span class="t" id="t9" style="left:411.30px;top:820.67px;font-size:29.33px;font-weight:400;color:#f4f4f4;letter-spacing:0.622px;">Multitasking</span>
<span class="t" id="t10" style="left:411.30px;top:908.67px;font-size:29.33px;font-weight:400;color:#f4f4f4;letter-spacing:-0.275px;">Appearance</span>
<span class="t" id="t11" style="left:411.30px;top:996.67px;font-size:29.33px;font-weight:400;color:#f4f4f4;letter-spacing:0.337px;">Ubuntu Desktop</span>
<span class="t" id="t12" style="left:411.30px;top:1110.42px;font-size:29.33px;font-weight:400;color:#f4f4f4;letter-spacing:-0.720px;">Apps</span>
<span class="t" id="t13" style="left:411.30px;top:1198.42px;font-size:29.33px;font-weight:400;color:#f4f4f4;letter-spacing:0.662px;">Notifications</span>
<span class="t" id="t14" style="left:411.30px;top:1286.42px;font-size:29.33px;font-weight:400;color:#f4f4f4;letter-spacing:-1.448px;">Search</span>
<span class="t" id="t15" style="left:411.30px;top:1374.42px;font-size:29.33px;font-weight:400;color:#f4f4f4;letter-spacing:0.125px;">Online Accounts</span>
<span class="t" id="t16" style="left:1495.00px;top:166.17px;font-size:29.33px;font-weight:700;color:#f4f4f4;letter-spacing:-1.434px;">Sound</span>
<span class="t" id="t17" style="left:982.00px;top:294.67px;font-size:29.33px;font-weight:700;color:#f4f4f4;letter-spacing:0.481px;">Output</span>
<span class="t" id="t18" style="left:1010.00px;top:402.67px;font-size:29.33px;font-weight:400;color:#f4f4f4;letter-spacing:0.305px;">Output Device</span>
<span class="t" id="t19" style="left:1317.50px;top:402.67px;font-size:29.33px;font-weight:700;color:#f4f4f4;letter-spacing:-0.475px;">Speakers - Built-in Audio</span>
<span class="t" id="t20" style="left:1947.50px;top:402.67px;font-size:29.33px;font-weight:700;color:#f4f4f4;letter-spacing:-0.180px;">Test…</span>
<span class="t" id="t21" style="left:1010.00px;top:528.92px;font-size:29.33px;font-weight:400;color:#f4f4f4;letter-spacing:0.462px;">Configuration</span>
<span class="t" id="t22" style="left:1262.00px;top:528.92px;font-size:29.33px;font-weight:700;color:#f4f4f4;letter-spacing:-0.336px;">Analog Surround 4.0 Output</span>
<span class="t" id="t23" style="left:1010.00px;top:653.92px;font-size:29.33px;font-weight:400;color:#f4f4f4;letter-spacing:0.603px;">Output Volume</span>
<span class="t" id="t24" style="left:1010.00px;top:787.17px;font-size:29.33px;font-weight:400;color:#f4f4f4;letter-spacing:-0.883px;">Balance</span>
<span class="t" id="t25" style="left:1010.00px;top:892.87px;font-size:29.33px;font-weight:400;color:#f4f4f4;letter-spacing:0.448px;">Overamplification</span>
<span class="t" id="t26" style="left:1010.00px;top:934.92px;font-size:23.60px;font-weight:400;color:#999999;letter-spacing:0.532px;">Allow volume to exceed 100%, with reduced sound quality</span>
<span class="t" id="t27" style="left:982.00px;top:1047.17px;font-size:29.33px;font-weight:700;color:#f4f4f4;letter-spacing:0.020px;">Input</span>
<span class="t" id="t28" style="left:1010.00px;top:1154.67px;font-size:29.33px;font-weight:400;color:#f4f4f4;letter-spacing:-0.094px;">Input Device</span>
<span class="t" id="t29" style="left:1317.50px;top:1154.67px;font-size:29.33px;font-weight:700;color:#f4f4f4;letter-spacing:-0.163px;">Internal Microphone - Built-in Audio</span>
<span class="t" id="t30" style="left:1010.00px;top:1280.17px;font-size:29.33px;font-weight:400;color:#f4f4f4;letter-spacing:0.345px;">Input Volume</span>
<svg class="ovl" width="2560" height="1600" viewBox="0 0 2560 1600">
<circle cx="359.50" cy="180.00" r="11.30" fill="none" stroke="#f6f6f6" stroke-width="2.20"/><path d="M367.64 188.14 L373.84 194.34" stroke="#f6f6f6" stroke-width="3" stroke-linecap="butt"/>
<rect x="748.75" y="172.00" width="20.5" height="2" fill="#f6f6f6"/>
<rect x="748.75" y="180.25" width="20.5" height="2" fill="#f6f6f6"/>
<rect x="748.75" y="188.50" width="20.5" height="2" fill="#f6f6f6"/>
<rect x="2072.5" y="185.8" width="16.8" height="2" fill="#f6f6f6"/>
<rect x="2148" y="175.2" width="14.2" height="14.2" fill="none" stroke="#f6f6f6" stroke-width="2"/>
<path d="M2221.6 174.6 L2236.6 189.6 M2236.6 174.6 L2221.6 189.6" stroke="#f6f6f6" stroke-width="2.2"/>
<g fill="none" stroke="#f6f6f6" stroke-width="2.1" stroke-linecap="round">
<path d="M357 277.2 Q371 263.4 385 277.2"/>
<path d="M361 281.4 Q371 271.6 381 281.4"/>
<path d="M365 285.6 Q371 280 377 285.6"/>
</g><circle cx="371" cy="292" r="3.9" fill="#f6f6f6"/>
<g fill="none" stroke="#f6f6f6" stroke-width="2.1">
<path d="M358 367 v-6.2 a3.2 3.2 0 0 1 3.2 -3.2 h19.6 a3.2 3.2 0 0 1 3.2 3.2 v6.2"/>
<rect x="358" y="367" width="26" height="10.6" rx="3.6"/>
</g>
<rect x="377.3" y="361.3" width="4.2" height="2.2" fill="#f6f6f6"/><rect x="377.3" y="371.2" width="4.2" height="2.2" fill="#f6f6f6"/>
<rect x="369" y="378" width="4" height="2.6" fill="#f6f6f6"/><rect x="357" y="381.4" width="28" height="2.1" fill="#f6f6f6"/>
<rect x="361" y="441.7" width="22" height="32.1" rx="3" fill="#f6f6f6"/>
<path d="M366 451.5 L377.5 463.5 L372 469 V446.5 L377.5 452 L366 464" fill="none" stroke="#303030" stroke-width="2"/>
<rect x="356.10" y="559.40" width="29.6" height="21.6" rx="3.4" fill="none" stroke="#f6f6f6" stroke-width="2.2"/><path fill="#f6f6f6" d="M367.70 581.70 h6.4 l1.4 3.4 h4 v2.6 h-17.2 v-2.6 h4z"/>
<path fill="#f6f6f6" d="M357.10 657.30 Q357.10 654.20 359.90 654.20 L364.10 654.20 L371.30 646.60 L371.30 674.00 L364.10 666.40 L359.90 666.40 Q357.10 666.40 357.10 663.30 Z"/><path fill="none" stroke="#f6f6f6" stroke-width="2.10" d="M375.50 654.60 Q380.90 660.30 375.50 666.00"/><path fill="none" stroke="#f6f6f6" stroke-width="2.10" d="M380.00 650.20 Q389.30 660.30 380.00 670.40"/>
<circle cx="372" cy="746.8" r="14" fill="none" stroke="#f6f6f6" stroke-width="2.1"/>
<path fill="#f6f6f6" d="M373.6 736.6 L366.8 748.2 H371 V757.4 L377 745.4 H373.2 Z"/>
<path d="M361 838 h-2 a3 3 0 0 1 -3 -3 v-8.5 a3 3 0 0 1 3 -3 h16 a3 3 0 0 1 3 3 v2" fill="none" stroke="#8c8c8c" stroke-width="2.1"/>
<rect x="364.1" y="831.6" width="21.6" height="15" rx="4" fill="none" stroke="#f6f6f6" stroke-width="2.2"/>
<path d="M375 910.9 h-15.5 a3.4 3.4 0 0 0 -3.4 3.4 v14.8 a3.4 3.4 0 0 0 3.4 3.4 h22.8 a3.4 3.4 0 0 0 3.4 -3.4 v-10.5" fill="none" stroke="#f6f6f6" stroke-width="2.2"/>
<path fill="#f6f6f6" d="M367.70 933.20 h6.4 l1.4 3.4 h4 v2.6 h-17.2 v-2.6 h4z"/>
<path d="M386.6 908.4 L377.6 918" stroke="#f6f6f6" stroke-width="4.2"/>
<path fill="#f6f6f6" d="M364.8 928 C369 926 367 919 372.5 918.2 C377 917.6 379.6 922 376.4 925.6 C373.4 929 368 929 364.8 928 Z"/>
<rect x="356.10" y="999.50" width="29.6" height="21.6" rx="3.4" fill="none" stroke="#f6f6f6" stroke-width="2.2"/><path fill="#f6f6f6" d="M367.70 1021.80 h6.4 l1.4 3.4 h4 v2.6 h-17.2 v-2.6 h4z"/>
<rect x="357" y="1001.30" width="4.2" height="2.6" fill="#f6f6f6"/>
<rect x="357" y="1005.90" width="4.2" height="2.6" fill="#f6f6f6"/>
<rect x="357" y="1010.50" width="4.2" height="2.6" fill="#f6f6f6"/>
<rect x="357" y="1015.10" width="4.2" height="2.6" fill="#f6f6f6"/>
<path d="M361.8 1009.8 Q371.5 998.6 383 1009.8 Q371.5 1021 361.8 1009.8 Z" fill="none" stroke="#f6f6f6" stroke-width="2"/>
<circle cx="370.8" cy="1009.8" r="3.3" fill="#f6f6f6"/><circle cx="372.2" cy="1008.3" r="1.1" fill="#303030"/>
<rect x="361.0" y="1116.0" width="4.1" height="4.1" rx=".6" fill="#f6f6f6"/>
<rect x="369.0" y="1116.0" width="4.1" height="4.1" rx=".6" fill="#f6f6f6"/>
<rect x="377.0" y="1116.0" width="4.1" height="4.1" rx=".6" fill="#f6f6f6"/>
<rect x="361.0" y="1124.0" width="4.1" height="4.1" rx=".6" fill="#f6f6f6"/>
<rect x="369.0" y="1124.0" width="4.1" height="4.1" rx=".6" fill="#f6f6f6"/>
<rect x="377.0" y="1124.0" width="4.1" height="4.1" rx=".6" fill="#f6f6f6"/>
<rect x="361.0" y="1132.0" width="4.1" height="4.1" rx=".6" fill="#f6f6f6"/>
<rect x="369.0" y="1132.0" width="4.1" height="4.1" rx=".6" fill="#f6f6f6"/>
<rect x="377.0" y="1132.0" width="4.1" height="4.1" rx=".6" fill="#f6f6f6"/>
<path d="M362.2 1220.4 C365.4 1212 363 1201.3 371 1201.3 C379 1201.3 376.6 1212 379.8 1220.4" fill="none" stroke="#f6f6f6" stroke-width="2.1"/>
<rect x="358.7" y="1220.3" width="24.6" height="2.2" fill="#f6f6f6"/>
<path d="M366.8 1224 h8.4 a4.2 4.2 0 0 1 -8.4 0z" fill="#f6f6f6"/>
<circle cx="369.40" cy="1300.00" r="11.20" fill="none" stroke="#f6f6f6" stroke-width="2.20"/><path d="M377.46 1308.06 L383.66 1314.26" stroke="#f6f6f6" stroke-width="3" stroke-linecap="butt"/>
<path d="M362.5 1399 a6.5 6.5 0 0 1 -.5 -13 a9 9 0 0 1 17.4 -2.2 a7.7 7.7 0 0 1 .4 15.2 z" fill="none" stroke="#f6f6f6" stroke-width="2.1"/>
<path fill="#f6f6f6" d="M1270.80 415.00 Q1270.80 411.90 1273.60 411.90 L1277.80 411.90 L1285.00 404.30 L1285.00 431.70 L1277.80 424.10 L1273.60 424.10 Q1270.80 424.10 1270.80 421.00 Z"/><path fill="none" stroke="#f6f6f6" stroke-width="2.10" d="M1289.20 412.30 Q1294.60 418.00 1289.20 423.70"/><path fill="none" stroke="#f6f6f6" stroke-width="2.10" d="M1293.70 407.90 Q1303.00 418.00 1293.70 428.10"/>
<path fill="none" stroke="#f6f6f6" stroke-width="2.2" stroke-linecap="round" stroke-linejoin="round" d="M1855.50 414.80 l9.5 9 l9.5 -9"/>
<path fill="none" stroke="#f6f6f6" stroke-width="2.2" stroke-linecap="round" stroke-linejoin="round" d="M2025.50 540.50 l9.5 9 l9.5 -9"/>
<path fill="none" stroke="#f6f6f6" stroke-width="2.2" stroke-linecap="round" stroke-linejoin="round" d="M2025.50 1167.00 l9.5 9 l9.5 -9"/>
<path fill="#f6f6f6" d="M1256.80 667.00 Q1256.80 663.90 1259.60 663.90 L1263.80 663.90 L1271.00 656.30 L1271.00 683.70 L1263.80 676.10 L1259.60 676.10 Q1256.80 676.10 1256.80 673.00 Z"/><path fill="none" stroke="#f6f6f6" stroke-width="2.10" d="M1275.20 664.30 Q1280.60 670.00 1275.20 675.70"/><path fill="none" stroke="#8e8e8e" stroke-width="2.10" d="M1279.70 659.90 Q1289.00 670.00 1279.70 680.10"/>
<rect x="1279.00" y="1153.80" width="10" height="22.4" rx="5" fill="#f6f6f6"/><path fill="none" stroke="#f6f6f6" stroke-width="2" d="M1276.70 1168.10 v1 a7.3 7.9 0 0 0 14.6 0 v-1"/><path fill="none" stroke="#f6f6f6" stroke-width="2" d="M1284.00 1178.60 v6 M1278.80 1185.20 h10.4"/>
<rect x="1259.00" y="1279.80" width="10" height="22.4" rx="5" fill="#f6f6f6"/><path fill="none" stroke="#f6f6f6" stroke-width="2" d="M1256.70 1294.10 v1 a7.3 7.9 0 0 0 14.6 0 v-1"/><path fill="none" stroke="#f6f6f6" stroke-width="2" d="M1264.00 1304.60 v6 M1258.80 1311.20 h10.4"/>
<path d="M1282.4 1286.6 Q1272.6 1296.4 1282.4 1306.2" fill="none" stroke="#f6f6f6" stroke-width="2"/>
<path d="M1286.8 1290.9 Q1280.8 1296.4 1286.8 1301.8" fill="none" stroke="#f6f6f6" stroke-width="2"/>
<g filter="drop-shadow(0 2px 2px rgba(0,0,0,.35))"><path d="M1653 840.8 L1638.6 827 A19 19 0 1 1 1667.4 827 Z" fill="#d4d4d4" stroke="#d4d4d4" stroke-width="2.4" stroke-linejoin="round"/></g>
<path d="M2245 16.9 C2241 20.5 2237 22.3 2233 22.6 C2233 33 2236.5 42 2245 47.5 Z" fill="#d6d6d6"/>
<path d="M2245 16.9 C2249 20.5 2253 22.3 2257.2 22.6 C2257.2 33 2253.5 42 2245 47.5 Z" fill="#c6c6c6"/>
<circle cx="2252" cy="36.2" r="7.8" fill="#2eb04a"/><path d="M2248.3 36 l3 3 l4.6 -4.8" fill="none" stroke="#fff" stroke-width="1.6"/>
<path d="M2341.1 45.6 L2325 26 A25.6 25.6 0 0 1 2357.2 26 Z" fill="#f6f6f6"/>
<path d="M2327.4 29.4 A21 21 0 0 1 2354.8 29.4" fill="none" stroke="#505050" stroke-width="1.9"/>
<path fill="#f6f6f6" d="M2382.98 29.39 Q2382.98 26.38 2385.69 26.38 L2389.77 26.38 L2396.75 19.01 L2396.75 45.59 L2389.77 38.22 L2385.69 38.22 Q2382.98 38.22 2382.98 35.21 Z"/><path fill="none" stroke="#f6f6f6" stroke-width="2.04" d="M2400.82 26.77 Q2406.06 32.30 2400.82 37.83"/><path fill="none" stroke="#9a9a9a" stroke-width="2.04" d="M2405.19 22.50 Q2414.21 32.30 2405.19 42.10"/>
<rect x="2444.1" y="20" width="17.7" height="24.7" rx="3.6" fill="none" stroke="#f6f6f6" stroke-width="2.1"/>
<rect x="2449" y="16.2" width="8" height="3" rx="1" fill="#f6f6f6"/>
<rect x="2447.4" y="30.2" width="11.2" height="11.4" rx="1" fill="#f6f6f6"/>
<defs><linearGradient id="gTab" x1="0" x2="1" y1="0" y2="0"><stop offset="0" stop-color="#84294f"/><stop offset=".45" stop-color="#a8384a"/><stop offset="1" stop-color="#ee6428"/></linearGradient><linearGradient id="gFold" x1="0" x2="1" y1="0" y2="1"><stop offset="0" stop-color="#a2a2a2"/><stop offset="1" stop-color="#bcbcbc"/></linearGradient><linearGradient id="gFx" x1=".8" x2=".25" y1=".05" y2="1"><stop offset="0" stop-color="#fff04a"/><stop offset=".3" stop-color="#ffbb22"/><stop offset=".6" stop-color="#ff6a2a"/><stop offset=".85" stop-color="#fb2e55"/><stop offset="1" stop-color="#e81a8a"/></linearGradient><linearGradient id="gFx2" x1=".2" x2=".9" y1="0" y2="1"><stop offset="0" stop-color="#ffd02a"/><stop offset=".6" stop-color="#ff8a1e"/><stop offset="1" stop-color="#ff5a2a"/></linearGradient><radialGradient id="gGlobe" cx=".45" cy=".75" r=".8"><stop offset="0" stop-color="#5a6ae8"/><stop offset=".55" stop-color="#8a48e8"/><stop offset="1" stop-color="#c236e6"/></radialGradient><linearGradient id="gCalc" x1="0" x2="0" y1="0" y2="1"><stop offset="0" stop-color="#fbb81c"/><stop offset="1" stop-color="#fec934"/></linearGradient><linearGradient id="gBag" x1="0" x2="0" y1="0" y2="1"><stop offset="0" stop-color="#f2682c"/><stop offset="1" stop-color="#f07e40"/></linearGradient><linearGradient id="gPen" x1="0" x2="1" y1="0" y2="1"><stop offset="0" stop-color="#fbd040"/><stop offset=".5" stop-color="#f8c830"/><stop offset=".51" stop-color="#e6ac18"/><stop offset="1" stop-color="#e6ac18"/></linearGradient></defs><path d="M25.2 1578 V1528 a5.5 5.5 0 0 1 5.5 -5.5 h16 q2.5 0 4.2 1.8 l1.6 1.6 q1.4 1.4 3.6 1.4 h26 a5.5 5.5 0 0 1 5.5 5.5 V1578 Z" fill="url(#gTab)" stroke="#34161f" stroke-width="1.4"/><rect x="25.6" y="1536.2" width="61.6" height="42.6" rx="5.5" fill="url(#gFold)" stroke="#34161f" stroke-width="1.2"/><rect x="26.6" y="1537" width="59.6" height="1.4" rx=".7" fill="#d0d0d0" opacity=".6"/><rect x="47.9" y="1545.8" width="16.2" height="4.8" rx="2.4" fill="#f6f6f6"/><g><path d="M160.2 1520 C164.5 1524 167 1528.5 168 1532.5 C169.5 1530.5 170.5 1529 171.8 1527.2 C178 1534 181 1543 180 1552.5 C178.5 1567.5 166.5 1578.5 151.5 1578.2 C136 1578 124 1565.5 124 1550.5 C124 1541 128.5 1534.5 134 1529.5 C134.3 1532.5 134.8 1534.5 135.6 1536.5 C138 1533.5 140.5 1531.8 143 1531 C142.6 1533.5 142.8 1535.5 143.6 1537.5 C146.5 1535 150.5 1533.5 155 1534.5 C153.5 1529 155.5 1523.5 160.2 1520 Z" fill="url(#gFx)"/><circle cx="151.8" cy="1549.8" r="12.6" fill="url(#gGlobe)"/><path d="M131 1546 C133 1540 138 1537.5 143.6 1537.5 C147 1538 150 1540 152 1543.5 C148.5 1543.5 145.5 1545 143.5 1547.5 C140.5 1551 140.5 1556 143 1560 C139 1558 135.5 1554 134.5 1549 C133.5 1548 132 1547 131 1546 Z" fill="url(#gFx2)"/><path d="M157.5 1541 q2.6 -1 4.4 .6 q-2.2 -.1 -3 .9z" fill="#ffd0f0"/></g><rect x="223.4" y="1521.3" width="50" height="57.6" rx="6.5" fill="#f1f1f1" stroke="#0e1a2c" stroke-width="1" /><path d="M223.9 1533.6 V1528 a6 6 0 0 1 6 -6 h37 a6 6 0 0 1 6 6 V1533.6 Z" fill="#3584e4"/><rect x="230.2" y="1540.1" width="23.6" height="1.8" fill="#c9c5bc"/><rect x="230.2" y="1544.1" width="23.6" height="1.8" fill="#c9c5bc"/><rect x="230.2" y="1548.1" width="23.6" height="1.8" fill="#c9c5bc"/><rect x="230.2" y="1552.1" width="23.6" height="1.8" fill="#c9c5bc"/><rect x="230.2" y="1558.1" width="23.6" height="1.8" fill="#c9c5bc"/><rect x="230.2" y="1562.1" width="23.6" height="1.8" fill="#c9c5bc"/><g transform="translate(232.7 1572) rotate(-45.6)"><path d="M0 0 L10 -4.8 L10 4.8 Z" fill="#fbebbe"/><path d="M0 0 L3.4 -1.6 L3.4 1.6 Z" fill="#444"/><rect x="10" y="-4.8" width="38" height="9.6" fill="url(#gPen)"/><rect x="10" y="-4.8" width="38" height="4.8" fill="#f9cb34"/><rect x="10" y="0" width="38" height="4.8" fill="#e7ae1a"/><rect x="48" y="-4.8" width="4.4" height="9.6" fill="#a3a3a3"/><path d="M52.4 -4.8 h4 a4.8 4.8 0 0 1 0 9.6 h-4 z" fill="#f2646a"/></g><rect x="316" y="1525" width="56" height="49.2" rx="7" fill="#4e4e4e" stroke="#1e1e22" stroke-width="1.4"/><path d="M323 1533.6 L331.4 1537.2 L323 1540.8" fill="none" stroke="#fafafa" stroke-width="2.1"/><rect x="332" y="1544" width="10.2" height="2.2" fill="#fafafa"/><clipPath id="cCalc"><rect x="411.8" y="1521.3" width="56.6" height="57.2" rx="7.5"/></clipPath><g clip-path="url(#cCalc)"><rect x="411" y="1521" width="29" height="29" fill="#4d4d4d"/><rect x="411" y="1549.6" width="29" height="30" fill="#5f5f5f"/><rect x="439.8" y="1521" width="30" height="58" fill="url(#gCalc)"/></g><rect x="411.8" y="1521.3" width="56.6" height="57.2" rx="7.5" fill="none" stroke="#15181c" stroke-width="1.2"/><path d="M417.8 1541 h14 M424.8 1534 v14 M417.8 1562.9 h14 M447.9 1548.8 h14 M447.9 1554.8 h14" stroke="#fff" stroke-width="2.5" fill="none"/><path d="M518.6 1522 h35.6 a3.4 3.4 0 0 1 3.4 3 l2.9 49.4 a3.6 3.6 0 0 1 -3.6 3.8 h-41 a3.6 3.6 0 0 1 -3.6 -3.8 l2.9 -49.4 a3.4 3.4 0 0 1 3.4 -3z" fill="url(#gBag)"/><path d="M518.6 1522 h35.6 a3.4 3.4 0 0 1 3.4 3 l.8 13.2 h-44 l.8 -13.2 a3.4 3.4 0 0 1 3.4 -3z" fill="#ef5b1f"/><path d="M524.5 1524.6 v2.4 a11.7 11.7 0 0 0 23.4 0 v-2.4" fill="none" stroke="#fff2ea" stroke-width="2.2"/><path d="M533.3 1543.4 H539 L554 1573.6 H548.4 L536.15 1549.4 L523.9 1573.6 H518.3 Z" fill="#fdf3ee"/><rect x="519" y="1561.6" width="34.4" height="5.2" rx="2.6" fill="#fff"/><rect x="522" y="1563.6" width="28.4" height="1" fill="#d8cfe0"/><rect x="586" y="1534" width="2" height="32" fill="#6e6e6e"/><circle cx="638.1" cy="1549.9" r="29.4" fill="#ededed" stroke="#2a2a2c" stroke-width="1.2"/><circle cx="638.1" cy="1549.9" r="21.8" fill="#4f4f4f"/><path d="M652.32 1547.65 L656.23 1548.28 L656.23 1551.52 L652.32 1552.15 L651.54 1555.06 L654.61 1557.56 L652.99 1560.37 L649.29 1558.96 L647.16 1561.09 L648.57 1564.79 L645.76 1566.41 L643.26 1563.34 L640.35 1564.12 L639.72 1568.03 L636.48 1568.03 L635.85 1564.12 L632.94 1563.34 L630.44 1566.41 L627.63 1564.79 L629.04 1561.09 L626.91 1558.96 L623.21 1560.37 L621.59 1557.56 L624.66 1555.06 L623.88 1552.15 L619.97 1551.52 L619.97 1548.28 L623.88 1547.65 L624.66 1544.74 L621.59 1542.24 L623.21 1539.43 L626.91 1540.84 L629.04 1538.71 L627.63 1535.01 L630.44 1533.39 L632.94 1536.46 L635.85 1535.68 L636.48 1531.77 L639.72 1531.77 L640.35 1535.68 L643.26 1536.46 L645.76 1533.39 L648.57 1535.01 L647.16 1538.71 L649.29 1540.84 L652.99 1539.43 L654.61 1542.24 L651.54 1544.74Z" fill="#d9d9d9"/><circle cx="638.1" cy="1549.9" r="10.2" fill="#4f4f4f"/><path d="M638.10 1549.90 L649.10 1549.90" stroke="#d9d9d9" stroke-width="2.2"/><path d="M638.10 1549.90 L631.79 1558.91" stroke="#d9d9d9" stroke-width="2.2"/><path d="M638.10 1549.90 L631.79 1540.89" stroke="#d9d9d9" stroke-width="2.2"/><circle cx="638.1" cy="1549.9" r="5.6" fill="#e2e2e2"/><circle cx="638" cy="1590" r="4" fill="#db4a1a"/><path d="M2504.99 1569.39 A18.70 18.70 0 0 1 2487.21 1557.82" fill="none" stroke="#f4f4f4" stroke-width="5.6"/><path d="M2488.09 1541.74 A18.70 18.70 0 0 1 2506.56 1532.11" fill="none" stroke="#f4f4f4" stroke-width="5.6"/><path d="M2520.24 1540.60 A18.70 18.70 0 0 1 2519.33 1562.09" fill="none" stroke="#f4f4f4" stroke-width="5.6"/><circle cx="2486.2" cy="1549.7" r="6.6" fill="#f4f4f4"/><circle cx="2514.3" cy="1534.9" r="6.6" fill="#f4f4f4"/><circle cx="2512.7" cy="1566.8" r="6.6" fill="#f4f4f4"/>
</svg>
</body></html>
